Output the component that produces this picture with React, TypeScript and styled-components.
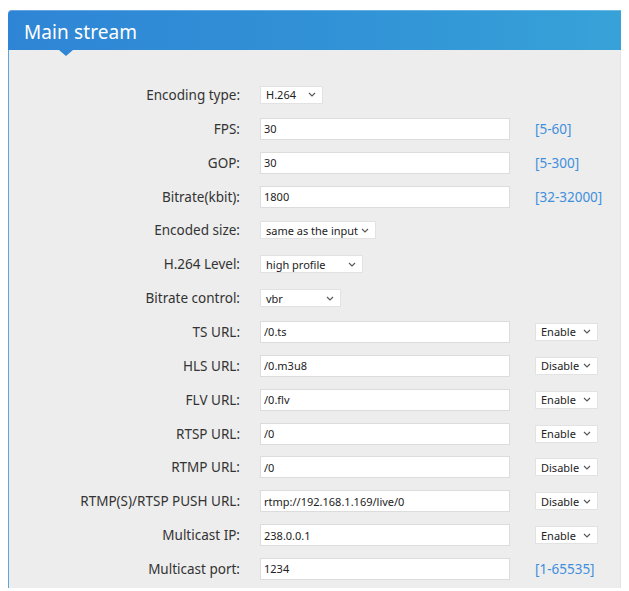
import React from "react";
import styled, { createGlobalStyle } from "styled-components";

const Global = createGlobalStyle`
  html, body { margin: 0; padding: 0; background: #ffffff; }
  body { font-family: "Noto Sans", "Open Sans", Arial, sans-serif; }
`;

const Page = styled.div`
  padding: 10px 8px 0 8px;
  width: 613px;
`;

const Panel = styled.section`
  display: flex;
  flex-direction: column;
  width: 613px;
`;

const Header = styled.header`
  position: relative;
  box-sizing: border-box;
  height: 40px;
  display: flex;
  align-items: center;
  padding: 5px 0 0 16px;
  border-radius: 4px 0 0 0;
  background: linear-gradient(90deg, #2f85d5 0%, #3191d6 50%, #37a2d8 100%);
  box-shadow: inset 0 1px 0 rgba(255, 255, 255, 0.25);
`;

const Title = styled.h2`
  margin: 0;
  font-size: 19px;
  font-weight: 400;
  color: #ffffff;
  letter-spacing: 0.1px;
  line-height: 1;
`;

const Caret = styled.span`
  position: absolute;
  left: 51px;
  bottom: -6px;
  width: 0;
  height: 0;
  border-left: 7px solid transparent;
  border-right: 7px solid transparent;
  border-top: 6px solid #2f86d5;
`;

const Body = styled.div`
  background: #ededed;
  border-left: 1px solid #5aa6de;
  border-right: 1px solid #e4e4e4;
  padding: 28px 0 2px 0;
  display: grid;
  grid-template-columns: 231px 250px 1fr;
  column-gap: 20px;
  grid-auto-rows: 33.86px;
`;

const Label = styled.label`
  align-self: center;
  justify-self: end;
  font-size: 13.5px;
  color: #333333;
  white-space: nowrap;
`;

const Field = styled.div`
  align-self: center;
  display: flex;
`;

const Extra = styled.div`
  align-self: center;
  display: flex;
  padding-left: 5px;
`;

const TextInput = styled.input`
  box-sizing: border-box;
  width: 250px;
  height: 22px;
  border: 1px solid #dcdcdc;
  background: #ffffff;
  padding: 0 3px;
  font-family: "Noto Sans", "Open Sans", Arial, sans-serif;
  font-size: 11px;
  color: #222222;
  outline: none;
`;

const SelectBox = styled.div<{ $w: number }>`
  box-sizing: border-box;
  width: ${(p) => p.$w}px;
  height: 18px;
  background: #ffffff;
  border: 1px solid #e2e2e2;
  display: flex;
  align-items: center;
  justify-content: space-between;
  padding: 0 6px 0 5px;
  font-size: 11px;
  color: #222222;
  white-space: nowrap;
`;

const Range = styled.span`
  font-size: 13.5px;
  color: #3f8fdc;
  white-space: nowrap;
`;

const Chevron = () => (
  <svg width="8" height="5" viewBox="0 0 8 5" aria-hidden="true">
    <path d="M1 1 L4 4 L7 1" fill="none" stroke="#555" strokeWidth="1.1" />
  </svg>
);

const Select = ({ value, w }: { value: string; w: number }) => (
  <SelectBox $w={w}>
    <span>{value}</span>
    <Chevron />
  </SelectBox>
);

type Row = {
  label: string;
  input?: string;
  select?: { value: string; w: number };
  range?: string;
  toggle?: string;
};

const rows: Row[] = [
  { label: "Encoding type:", select: { value: "H.264", w: 63 } },
  { label: "FPS:", input: "30", range: "[5-60]" },
  { label: "GOP:", input: "30", range: "[5-300]" },
  { label: "Bitrate(kbit):", input: "1800", range: "[32-32000]" },
  { label: "Encoded size:", select: { value: "same as the input", w: 116 } },
  { label: "H.264 Level:", select: { value: "high profile", w: 103 } },
  { label: "Bitrate control:", select: { value: "vbr", w: 81 } },
  { label: "TS URL:", input: "/0.ts", toggle: "Enable" },
  { label: "HLS URL:", input: "/0.m3u8", toggle: "Disable" },
  { label: "FLV URL:", input: "/0.flv", toggle: "Enable" },
  { label: "RTSP URL:", input: "/0", toggle: "Enable" },
  { label: "RTMP URL:", input: "/0", toggle: "Disable" },
  { label: "RTMP(S)/RTSP PUSH URL:", input: "rtmp://192.168.1.169/live/0", toggle: "Disable" },
  { label: "Multicast IP:", input: "238.0.0.1", toggle: "Enable" },
  { label: "Multicast port:", input: "1234", range: "[1-65535]" },
];

export default function App() {
  return (
    <>
      <Global />
      <Page>
        <Panel>
          <Header>
            <Title>Main stream</Title>
            <Caret />
          </Header>
          <Body>
            {rows.map((r) => (
              <React.Fragment key={r.label}>
                <Label>{r.label}</Label>
                <Field>
                  {r.select ? (
                    <Select value={r.select.value} w={r.select.w} />
                  ) : (
                    <TextInput defaultValue={r.input} />
                  )}
                </Field>
                <Extra>
                  {r.range && <Range>{r.range}</Range>}
                  {r.toggle && <Select value={r.toggle} w={63} />}
                </Extra>
              </React.Fragment>
            ))}
          </Body>
        </Panel>
      </Page>
    </>
  );
}
